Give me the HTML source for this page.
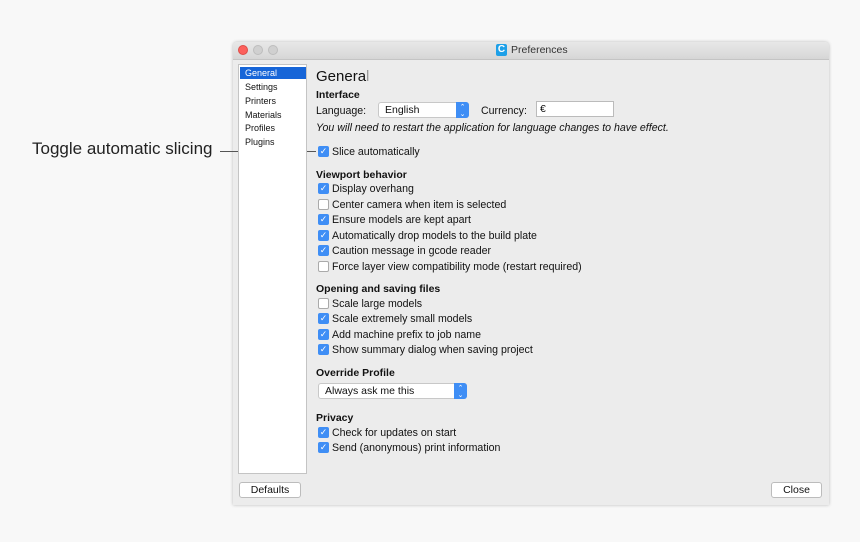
<!DOCTYPE html>
<html><head><style>
body{margin:0;width:860px;height:542px;background:#f8f8f8;font-family:"Liberation Sans",sans-serif;position:relative;overflow:hidden;color:#111}
.a{position:absolute;white-space:nowrap}
#win{position:absolute;left:233px;top:42px;width:596px;height:463px;background:#ececec;box-shadow:0 0 3px rgba(0,0,0,.25);border-radius:4px 4px 0 0}
#tb{position:absolute;left:0;top:0;width:596px;height:17px;background:linear-gradient(#e8e8e8,#d6d6d6);border-bottom:1px solid #c4c4c4;border-radius:4px 4px 0 0}
.dot{position:absolute;top:3px;width:10px;height:10px;border-radius:50%;background:#d0d0d0;border:1px solid #bdbdbd;box-sizing:border-box}
#side{position:absolute;left:238px;top:64px;width:69px;height:410px;background:#fff;border:1px solid #c4c4c4;box-sizing:border-box}
.si{position:absolute;left:6px;font-size:9px}
.t{font-size:10.6px}
.h{font-size:10.5px;font-weight:bold}
.cb{position:absolute;left:318px;width:11px;height:11px;border-radius:2px;box-sizing:border-box}
.on{background:#3f8ef5;color:#fff;font-size:9px;line-height:11px;text-align:center}
.off{background:#fff;border:1px solid #aaa}
.btn{position:absolute;background:#fff;border:1px solid #bcbcbc;border-radius:3px;font-size:10.5px;text-align:center;box-sizing:border-box}
.sel{position:absolute;background:#fff;border:1px solid #c8c8c8;border-radius:3px;box-sizing:border-box;font-size:10.5px}
.arr{position:absolute;right:-1px;top:-1px;bottom:-1px;width:13px;background:#3f8ef5;border-radius:0 3px 3px 0;color:#fff;font-size:7px;line-height:7px;text-align:center;padding-top:2px;box-sizing:border-box}
</style></head><body>
<div class="a" style="left:32px;top:139px;font-size:17px;color:#222">Toggle automatic slicing</div>
<div id="win">
<div id="tb">
<div class="dot" style="left:5px;background:#fc605c;border-color:#de4c47"></div>
<div class="dot" style="left:20px"></div>
<div class="dot" style="left:35px"></div>
<div class="a" style="left:263px;top:2px;width:11px;height:12px;background:#1ea0e8;border-radius:2px;color:#fff;font-size:10px;font-weight:bold;line-height:12px;text-align:center">C</div>
<div class="a" style="left:278px;top:2px;font-size:10.5px;color:#333">Preferences</div>
</div>
</div>
<div class="a" style="left:220px;top:151px;width:96px;height:1px;background:#555"></div>
<div id="side">
<div class="a" style="left:1px;top:2px;width:66px;height:12px;background:#1665d8"></div>
<div class="si a" style="top:3px;color:#fff">General</div>
<div class="si a" style="top:17px">Settings</div>
<div class="si a" style="top:31px">Printers</div>
<div class="si a" style="top:45px">Materials</div>
<div class="si a" style="top:58px">Profiles</div>
<div class="si a" style="top:72px">Plugins</div>
</div>
<div class="a" style="left:316px;top:68px;font-size:15px">Genera<span style="color:#999">l</span></div>
<div class="a h" style="left:316px;top:89px">Interface</div>
<div class="a t" style="left:316px;top:105px">Language:</div>
<div class="sel" style="left:378px;top:102px;width:91px;height:16px"><span class="a" style="left:6px;top:1px">English</span><div class="arr">⌃<br>⌄</div></div>
<div class="a t" style="left:481px;top:105px">Currency:</div>
<div class="a" style="left:536px;top:101px;width:78px;height:16px;background:#fff;border:1px solid #bbb;box-sizing:border-box;font-size:10.5px;padding:1px 3px">€</div>
<div class="a t" style="left:316px;top:122px;font-style:italic">You will need to restart the application for language changes to have effect.</div>
<div class="cb on" style="top:146px">✓</div><div class="a t" style="left:332px;top:146px">Slice automatically</div>
<div class="a h" style="left:316px;top:169px">Viewport behavior</div>
<div class="cb on" style="top:183px">✓</div><div class="a t" style="left:332px;top:183px">Display overhang</div>
<div class="cb off" style="top:199px"></div><div class="a t" style="left:332px;top:199px">Center camera when item is selected</div>
<div class="cb on" style="top:214px">✓</div><div class="a t" style="left:332px;top:214px">Ensure models are kept apart</div>
<div class="cb on" style="top:230px">✓</div><div class="a t" style="left:332px;top:230px">Automatically drop models to the build plate</div>
<div class="cb on" style="top:245px">✓</div><div class="a t" style="left:332px;top:245px">Caution message in gcode reader</div>
<div class="cb off" style="top:261px"></div><div class="a t" style="left:332px;top:261px">Force layer view compatibility mode (restart required)</div>
<div class="a h" style="left:316px;top:283px">Opening and saving files</div>
<div class="cb off" style="top:298px"></div><div class="a t" style="left:332px;top:298px">Scale large models</div>
<div class="cb on" style="top:313px">✓</div><div class="a t" style="left:332px;top:313px">Scale extremely small models</div>
<div class="cb on" style="top:329px">✓</div><div class="a t" style="left:332px;top:329px">Add machine prefix to job name</div>
<div class="cb on" style="top:344px">✓</div><div class="a t" style="left:332px;top:344px">Show summary dialog when saving project</div>
<div class="a h" style="left:316px;top:367px">Override Profile</div>
<div class="sel" style="left:318px;top:383px;width:149px;height:16px"><span class="a" style="left:6px;top:1px">Always ask me this</span><div class="arr">⌃<br>⌄</div></div>
<div class="a h" style="left:316px;top:412px">Privacy</div>
<div class="cb on" style="top:427px">✓</div><div class="a t" style="left:332px;top:427px">Check for updates on start</div>
<div class="cb on" style="top:442px">✓</div><div class="a t" style="left:332px;top:442px">Send (anonymous) print information</div>
<div class="btn" style="left:239px;top:482px;width:62px;height:16px;line-height:14px">Defaults</div>
<div class="btn" style="left:771px;top:482px;width:51px;height:16px;line-height:14px">Close</div>
</body></html>
